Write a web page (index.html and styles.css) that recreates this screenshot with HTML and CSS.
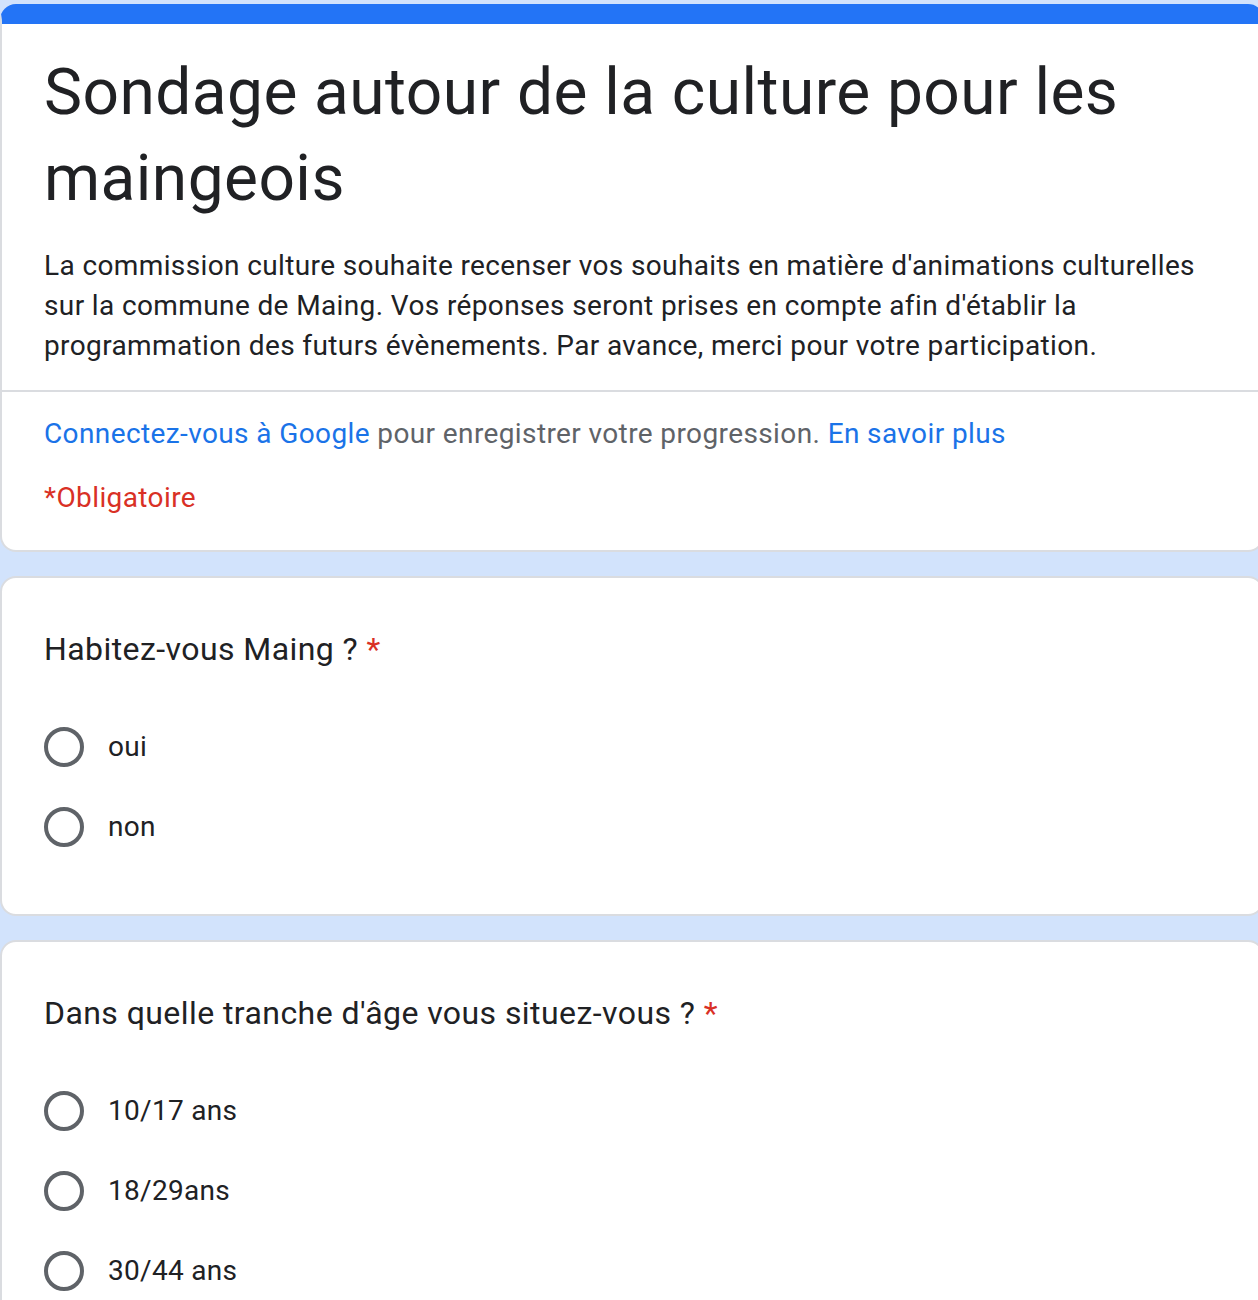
FILE: index.html
```html
<!DOCTYPE html>
<html lang="fr">
<head>
<meta charset="utf-8">
<title>Sondage autour de la culture pour les maingeois</title>
<link rel="stylesheet" href="styles.css">
</head>
<body>
<main class="page">
  <section class="card card-header">
    <div class="header-body">
      <h1 class="form-title">Sondage autour de la culture pour les maingeois</h1>
      <p class="form-desc">La commission culture souhaite recenser vos souhaits en matière d'animations culturelles sur la commune de Maing. Vos réponses seront prises en compte afin d'établir la programmation des futurs évènements. Par avance, merci pour votre participation.</p>
    </div>
    <div class="divider"></div>
    <div class="header-foot">
      <p class="signin"><a class="link" href="#">Connectez-vous à Google</a> pour enregistrer votre progression. <a class="link" href="#">En savoir plus</a></p>
      <p class="required-note">*Obligatoire</p>
    </div>
  </section>

  <section class="card card-question">
    <h2 class="q-title">Habitez-vous Maing ? <span class="star">*</span></h2>
    <div class="options">
      <label class="option"><span class="radio"></span><span class="opt-label">oui</span></label>
      <label class="option"><span class="radio"></span><span class="opt-label">non</span></label>
    </div>
  </section>

  <section class="card card-question">
    <h2 class="q-title">Dans quelle tranche d'âge vous situez-vous ? <span class="star">*</span></h2>
    <div class="options">
      <label class="option"><span class="radio"></span><span class="opt-label">10/17 ans</span></label>
      <label class="option"><span class="radio"></span><span class="opt-label">18/29ans</span></label>
      <label class="option"><span class="radio"></span><span class="opt-label">30/44 ans</span></label>
    </div>
  </section>
</main>
</body>
</html>
```

FILE: styles.css
```css
html, body {
  margin: 0;
  padding: 0;
}
body {
  background: #d2e3fc;
  font-family: Roboto, "Liberation Sans", Arial, sans-serif;
  color: #202124;
  overflow: hidden;
  height: 1300px;
}
.page {
  padding-top: 4px;
  display: flex;
  flex-direction: column;
  gap: 24px;
}
.card {
  width: 1264px;
  box-sizing: border-box;
  background: #fff;
  border: 2px solid #dadce0;
  border-radius: 16px;
  flex: none;
}
.card-header {
  border-top: 20px solid #2374f6;
}
.header-body {
  padding: 26px 48px 24px 42px;
}
.form-title {
  margin: 0;
  font-weight: 400;
  font-size: 64px;
  line-height: 86px;
  letter-spacing: 0.45px;
}
.form-desc {
  margin: 24px 0 0;
  font-size: 28px;
  line-height: 40px;
  letter-spacing: 0.38px;
}
.divider {
  height: 2px;
  background: #dadce0;
}
.header-foot {
  padding: 22px 48px 32px 42px;
  display: flex;
  flex-direction: column;
  gap: 24px;
}
.signin, .required-note {
  margin: 0;
  font-size: 28px;
  line-height: 40px;
  letter-spacing: 0.39px;
}
.signin {
  color: #5f6368;
}
.link {
  color: #1a73e8;
  text-decoration: none;
}
.required-note {
  color: #d93025;
}
.card-question {
  padding: 49px 48px 47px 42px;
}
.q-title {
  margin: 0;
  font-weight: 400;
  font-size: 32px;
  line-height: 44px;
  letter-spacing: 0.43px;
}
.star {
  color: #d93025;
}
.options {
  margin-top: 36px;
  display: flex;
  flex-direction: column;
}
.option {
  height: 80px;
  display: flex;
  align-items: center;
  gap: 24px;
}
.radio {
  width: 40px;
  height: 40px;
  box-sizing: border-box;
  border: 4px solid #5f6368;
  border-radius: 50%;
  flex: none;
}
.opt-label {
  font-size: 28px;
  line-height: 40px;
  letter-spacing: 0.3px;
}
```
